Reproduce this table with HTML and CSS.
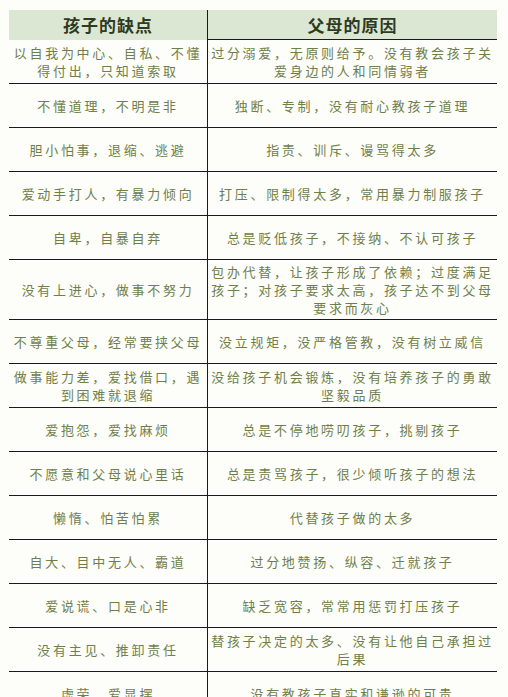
FILE: index.html
```html
<!DOCTYPE html>
<html lang="zh-CN">
<head>
<meta charset="utf-8">
<title>孩子的缺点与父母的原因</title>
<link rel="stylesheet" href="styles.css">
</head>
<body>
<div class="table">
  <div class="row head">
    <div class="cell left">孩子的缺点</div>
    <div class="cell right">父母的原因</div>
  </div>
  <div class="row">
    <div class="cell left">以自我为中心、自私、不懂<br>得付出，只知道索取</div>
    <div class="cell right">过分溺爱，无原则给予。没有教会孩子关<br>爱身边的人和同情弱者</div>
  </div>
  <div class="row">
    <div class="cell left">不懂道理，不明是非</div>
    <div class="cell right">独断、专制，没有耐心教孩子道理</div>
  </div>
  <div class="row">
    <div class="cell left">胆小怕事，退缩、逃避</div>
    <div class="cell right">指责、训斥、谩骂得太多</div>
  </div>
  <div class="row">
    <div class="cell left">爱动手打人，有暴力倾向</div>
    <div class="cell right">打压、限制得太多，常用暴力制服孩子</div>
  </div>
  <div class="row">
    <div class="cell left">自卑，自暴自弃</div>
    <div class="cell right">总是贬低孩子，不接纳、不认可孩子</div>
  </div>
  <div class="row tall">
    <div class="cell left">没有上进心，做事不努力</div>
    <div class="cell right">包办代替，让孩子形成了依赖；过度满足<br>孩子；对孩子要求太高，孩子达不到父母<br>要求而灰心</div>
  </div>
  <div class="row">
    <div class="cell left">不尊重父母，经常要挟父母</div>
    <div class="cell right">没立规矩，没严格管教，没有树立威信</div>
  </div>
  <div class="row">
    <div class="cell left">做事能力差，爱找借口，遇<br>到困难就退缩</div>
    <div class="cell right">没给孩子机会锻炼，没有培养孩子的勇敢<br>坚毅品质</div>
  </div>
  <div class="row">
    <div class="cell left">爱抱怨，爱找麻烦</div>
    <div class="cell right">总是不停地唠叨孩子，挑剔孩子</div>
  </div>
  <div class="row">
    <div class="cell left">不愿意和父母说心里话</div>
    <div class="cell right">总是责骂孩子，很少倾听孩子的想法</div>
  </div>
  <div class="row">
    <div class="cell left">懒惰、怕苦怕累</div>
    <div class="cell right">代替孩子做的太多</div>
  </div>
  <div class="row">
    <div class="cell left">自大、目中无人、霸道</div>
    <div class="cell right">过分地赞扬、纵容、迁就孩子</div>
  </div>
  <div class="row">
    <div class="cell left">爱说谎、口是心非</div>
    <div class="cell right">缺乏宽容，常常用惩罚打压孩子</div>
  </div>
  <div class="row">
    <div class="cell left">没有主见、推卸责任</div>
    <div class="cell right">替孩子决定的太多、没有让他自己承担过<br>后果</div>
  </div>
  <div class="row">
    <div class="cell left">虚荣、爱显摆</div>
    <div class="cell right">没有教孩子真实和谦逊的可贵</div>
  </div>
</div>
</body>
</html>
```

FILE: styles.css
```css
html, body {
  margin: 0;
  padding: 0;
  background: #fdfdf9;
  overflow: hidden;
}

.table {
  margin: 10px 0 0 9px;
  width: 488px;
  font-family: "Noto Sans CJK SC", "Noto Sans", sans-serif;
}

.row {
  display: grid;
  grid-template-columns: 199px 289px;
  height: 44px;
  box-sizing: border-box;
  border-bottom: 1px solid #1a1a1a;
}

.row.tall {
  height: 60px;
}

.cell {
  display: flex;
  align-items: center;
  justify-content: center;
  text-align: center;
  font-size: 13px;
  line-height: 18px;
  letter-spacing: 2.7px;
  color: #6f7f4b;
  white-space: nowrap;
}

.cell.left {
  border-right: 1.5px solid #1a1a1a;
}

.row.head {
  height: 30px;
  background: #dbe7d2;
  border-bottom: none;
}

.row.head .cell {
  font-size: 17px;
  font-weight: bold;
  letter-spacing: 1px;
  color: #2e3a22;
}

.row.head .cell.right {
  border-bottom: 1px solid #1a1a1a;
}
```
